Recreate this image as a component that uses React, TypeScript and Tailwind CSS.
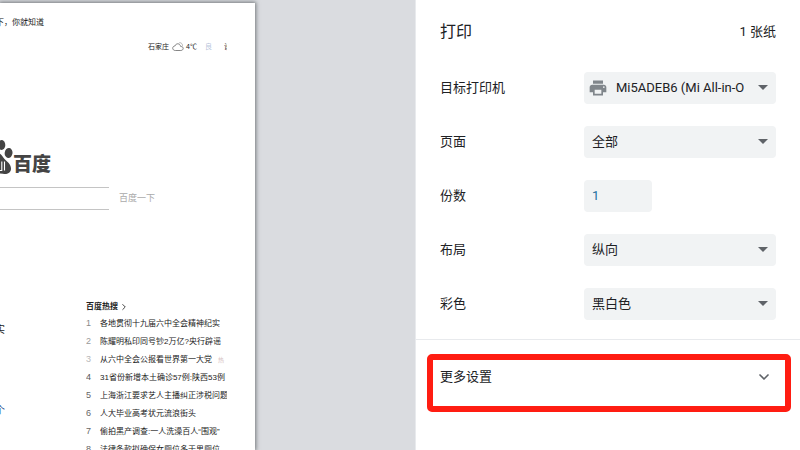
import type { ReactNode } from "react";
import { ChevronDown, ChevronRight } from "lucide-react";
import { MdArrowDropDown, MdPrint } from "react-icons/md";

const hotSearches = [
	{ text: "各地贯彻十九届六中全会精神纪实", color: "text-[#8a8a8a]" },
	{ text: "陈耀明私印同号钞2万亿?央行辟谣", color: "text-[#9a9a9a]" },
	{ text: "从六中全会公报看世界第一大党", color: "text-[#b8b8b8]", hot: true },
	{ text: "31省份新增本土确诊57例:陕西53例", color: "text-[#555]" },
	{ text: "上海浙江要求艺人主播纠正涉税问题", color: "text-[#666]" },
	{ text: "人大毕业高考状元流浪街头", color: "text-[#666]" },
	{ text: "偷拍黑产调查:一人洗澡百人“围观”", color: "text-[#666]" },
	{ text: "法律条款拟确保女厕位多于男厕位", color: "text-[#666]" },
];

function PawLogo() {
	return (
		<svg className="h-9 w-[13px]" viewBox="0 0 13 36" fill="#444">
			<ellipse cx="1.5" cy="6" rx="3.8" ry="5" />
			<ellipse cx="8.6" cy="14" rx="3.9" ry="5" transform="rotate(8 8.6 14)" />
			<path d="M-3 14C1 14 2 17 4.5 20C7 22.500 11 25 11 29.500C11 34.500 6.500 35.500 3 34.800L-3 34Z" />
			<path d="M-1 31.500H1.800V22.500M4.500 22.500V31.500" fill="none" stroke="#fff" strokeWidth="1.100" />
		</svg>
	);
}

function Cloud() {
	return (
		<svg className="h-3 w-3" viewBox="0 0 12 12" fill="none" stroke="#777" strokeWidth="0.9">
			<path d="M3.300 9.500H8.800C12 9.300 12 5.500 8.700 5.500C7.800 2 3.800 2 3.200 4.800C-0.300 5.200 0 9.500 3.300 9.500Z" />
			<path d="M6.500 2.500C8 0.700 11 2.300 10.400 5.400" stroke="#aaa" />
		</svg>
	);
}

function PreviewPage() {
	return (
		<div className="mt-[3px] w-[255px] flex-none overflow-hidden bg-white text-[8px] text-[#222] shadow-[0_0_4px_1px_rgba(60,64,67,0.65)]">
			<p className="mt-3 flex h-4 w-11 items-center justify-end whitespace-nowrap">
				下，你就知道
			</p>
			<div className="mt-2 flex h-4 items-center pl-[148px] pr-7 text-[7px]">
				<span className="w-6">石家庄</span>
				<Cloud />
				<span className="ml-0.5">4℃</span>
				<span className="ml-2 text-[#b9c6dc]">良</span>
				<span className="ml-auto h-2 w-[3px] overflow-hidden leading-2">设</span>
			</div>
			<div className="mt-21 flex h-9 items-end">
				<PawLogo />
				<span className="text-[19px] font-black leading-5 text-[#444]">百度</span>
			</div>
			<form className="mt-3 flex items-center">
				<input
					className="h-[23px] w-[109px] border-y border-[#c4c4c4] outline-none"
					aria-label="搜索"
				/>
				<button className="ml-[10px] text-[9px] text-[#aaa]" type="button">
					百度一下
				</button>
			</form>
			<div className="mt-[89px] flex">
				<div className="flex w-[5px] flex-none flex-col items-end pt-[23px] text-[10px]">
					<span className="h-[81px]">实</span>
					<span className="text-[#1d4f91]">个</span>
				</div>
				<section className="ml-[81px] w-[141px] flex-none">
					<h2 className="flex h-4 items-center gap-px font-bold">
						百度热搜
						<ChevronRight className="size-2.5" strokeWidth={2} />
					</h2>
					<ol>
						{hotSearches.map((item, index) => (
							<li
								key={item.text}
								className="flex h-[18px] items-center overflow-hidden whitespace-nowrap"
							>
								<span className={`w-3.5 flex-none text-[9px] ${item.color}`}>
									{index + 1}
								</span>
								<span>{item.text}</span>
								{item.hot && <span className="ml-1.5 text-[6px] text-[#d8c4c4]">热</span>}
							</li>
						))}
					</ol>
				</section>
			</div>
		</div>
	);
}

function Row({ id, label, children }: { id: string; label: string; children: ReactNode }) {
	return (
		<div className="flex h-8 items-center justify-between">
			<label htmlFor={id}>{label}</label>
			<div className="relative w-48">{children}</div>
		</div>
	);
}

function Select({ id, value, icon }: { id: string; value: string; icon?: ReactNode }) {
	return (
		<>
			{icon}
			<select
				id={id}
				className={`block h-8 w-full appearance-none rounded bg-[#f1f3f4] pr-8 ${icon ? "pl-8" : "pl-2"}`}
			>
				<option>{value}</option>
			</select>
			<MdArrowDropDown className="pointer-events-none absolute right-px top-[3px] size-6 text-[#5f6368]" />
		</>
	);
}

export default function App() {
	return (
		<div className="flex h-screen overflow-hidden bg-white font-['Roboto','Noto_Sans_CJK_SC',sans-serif] text-[13px] text-[#202124]">
			<main className="flex min-w-0 flex-1 overflow-hidden bg-[#dadce0] font-['Liberation_Sans','Noto_Sans_CJK_SC',sans-serif]">
				<PreviewPage />
			</main>
			<aside className="w-[385px] flex-none border-l border-[#e8eaed]">
				<header className="flex h-[72px] items-center justify-between px-6 pb-2">
					<h1 className="text-base">打印</h1>
					<span>1 张纸</span>
				</header>
				<div className="flex flex-col gap-[22px] px-6 pb-[19px]">
					<Row id="printer" label="目标打印机">
						<Select
							id="printer"
							value="Mi5ADEB6 (Mi All-in-O"
							icon={
								<MdPrint className="pointer-events-none absolute left-1 top-1.5 size-5 text-[#80868b]" />
							}
						/>
					</Row>
					<Row id="pages" label="页面">
						<Select id="pages" value="全部" />
					</Row>
					<Row id="copies" label="份数">
						<input
							id="copies"
							className="block h-8 w-[68px] rounded bg-[#f1f3f4] px-2 pb-0.5 text-[#1f6f9f]"
							defaultValue="1"
						/>
					</Row>
					<Row id="layout" label="布局">
						<Select id="layout" value="纵向" />
					</Row>
					<Row id="color" label="彩色">
						<Select id="color" value="黑白色" />
					</Row>
				</div>
				<div className="relative border-t border-[#e8eaed] pt-3">
					<button className="flex h-[50px] w-full items-center justify-between px-6" type="button">
						<span>更多设置</span>
						<ChevronDown className="mr-1 size-4 text-[#5f6368]" strokeWidth={2.5} />
					</button>
					<div className="pointer-events-none absolute left-[11px] right-[9px] top-3.5 h-[58px] rounded-[5px] border-[6px] border-[#ff1d12]" />
				</div>
			</aside>
		</div>
	);
}
